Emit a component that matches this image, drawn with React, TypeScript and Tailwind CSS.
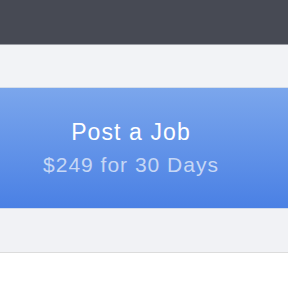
export default function App() {
  return (
    <div className="w-full min-h-[288px] bg-white font-['Liberation_Sans',Arial,sans-serif]">
      <div className="h-[45px] bg-[#474a54] border-b border-[#9a9ca3]" />
      <div className="h-[43px] bg-[#f2f3f6] border-b border-[#d5dde9]" />
      <a
        href="#"
        className="flex h-[121px] flex-col items-center justify-center gap-[8px] pr-[26px] border-b border-[#cfdaee] bg-gradient-to-b from-[#7ba6ec] to-[#4a80e4]"
      >
        <span className="text-[23px] leading-[26px] tracking-[1.1px] text-white">
          Post a Job
        </span>
        <span className="text-[21px] leading-[24px] tracking-[1px] text-[#c6d7f5]">
          $249 for 30 Days
        </span>
      </a>
      <div className="h-[44px] bg-[#f1f2f5] border-b border-[#dcdcdc]" />
    </div>
  );
}
